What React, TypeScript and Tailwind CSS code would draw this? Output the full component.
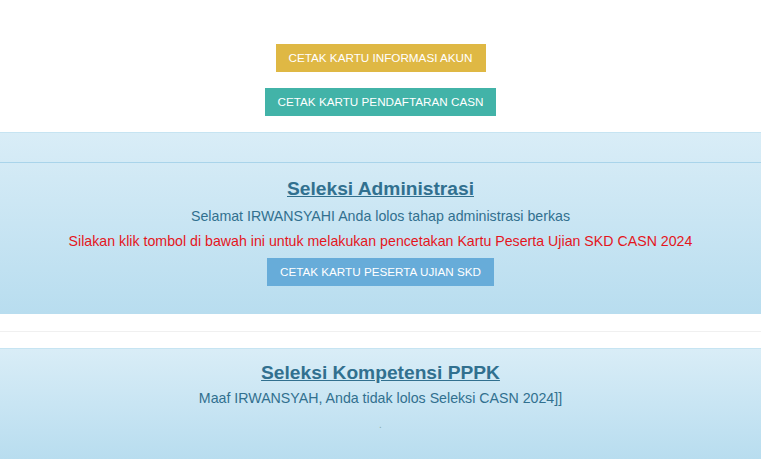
export default function App() {
  return (
    <div className="min-h-[469px] bg-white font-['Liberation_Sans',Arial,sans-serif]">
      {/* cetak buttons */}
      <div className="flex flex-col items-center gap-4 pt-11 pb-4">
        <button className="h-7 px-[13px] bg-[#dfb844] text-white text-[11.7px] leading-7">
          CETAK KARTU INFORMASI AKUN
        </button>
        <button className="h-7 px-[13px] bg-[#42b3a8] text-white text-[11.7px] leading-7">
          CETAK KARTU PENDAFTARAN CASN
        </button>
      </div>

      {/* Seleksi Administrasi */}
      <div className="border-t border-[#c6e4f2] bg-gradient-to-b from-[#d9edf7] to-[#b8ddef]">
        <div className="h-[30px] border-b border-[#a9d4ea]" />
        <div className="flex flex-col items-center pt-[14px] pb-7 text-[#31708f]">
          <h3 className="text-[19.2px] font-bold underline leading-6">Seleksi Administrasi</h3>
          <p className="mt-[3px] text-[14.2px] leading-6">Selamat IRWANSYAHI Anda lolos tahap administrasi berkas</p>
          <p className="mt-[1px] text-[14.2px] leading-6 text-[#e4161d]">
            Silakan klik tombol di bawah ini untuk melakukan pencetakan Kartu Peserta Ujian SKD CASN 2024
          </p>
          <button className="mt-[5px] h-7 px-[13px] bg-[#67acd9] text-white text-[11.7px] leading-7">
            CETAK KARTU PESERTA UJIAN SKD
          </button>
        </div>
      </div>

      <div className="h-[17px]" />
      <div className="h-[17px] border-t border-[#f0f0f0]" />

      {/* Seleksi Kompetensi PPPK */}
      <div className="border-t border-[#c6e4f2] bg-gradient-to-b from-[#d9edf7] to-[#b8ddef]">
        <div className="flex flex-col items-center pt-[12px] pb-[22px] text-[#31708f]">
          <h3 className="text-[19.2px] font-bold underline leading-6">Seleksi Kompetensi PPPK</h3>
          <p className="mt-[1px] text-[14.2px] leading-6">Maaf IRWANSYAH, Anda tidak lolos Seleksi CASN 2024]]</p>
          <p className="mt-[3px] text-[10px] leading-6 text-[#8aa]">.</p>
        </div>
      </div>
    </div>
  );
}
